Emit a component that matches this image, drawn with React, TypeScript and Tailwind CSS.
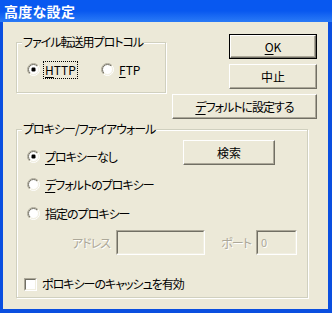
import type { ReactNode } from 'react';

const font = "[font-family:'Noto_Sans_CJK_JP','Liberation_Sans',sans-serif] [font-feature-settings:'palt']";

function Mn({ children }: { children: ReactNode }) {
  return <span className="underline underline-offset-2">{children}</span>;
}

function RadioDot({ checked }: { checked?: boolean }) {
  return (
    <svg width="13" height="13" viewBox="0 0 13 13" className="shrink-0">
      <defs>
        <linearGradient id="rOuter" x1="0" y1="0" x2="1" y2="1">
          <stop offset="50%" stopColor="#ACA899" />
          <stop offset="50%" stopColor="#FFFFFF" />
        </linearGradient>
        <linearGradient id="rInner" x1="0" y1="0" x2="1" y2="1">
          <stop offset="50%" stopColor="#716F64" />
          <stop offset="50%" stopColor="#F1EFE2" />
        </linearGradient>
      </defs>
      <circle cx="6.5" cy="6.5" r="6" fill="none" stroke="url(#rOuter)" strokeWidth="1" />
      <circle cx="6.5" cy="6.5" r="5" fill="#FFFFFF" stroke="url(#rInner)" strokeWidth="1" />
      {checked && <rect x="4.5" y="4.5" width="4" height="4" rx="1.2" fill="#000000" />}
    </svg>
  );
}

function Radio({ checked, focus, children }: { checked?: boolean; focus?: boolean; children: ReactNode }) {
  return (
    <div className="flex items-center h-[13px]">
      <RadioDot checked={checked} />
      <span
        className={`ml-[4px] leading-[16px] px-[1px] ${focus ? 'outline outline-1 outline-dotted outline-black' : ''}`}
      >
        {children}
      </span>
    </div>
  );
}

function Button({ w, def, children }: { w: string; def?: boolean; children: ReactNode }) {
  const face = (
    <div className="flex-1 flex items-center justify-center border border-t-white border-l-white border-r-[#716F64] border-b-[#716F64] shadow-[inset_-1px_-1px_0_#ACA899] bg-[#ECE9D8]">
      {children}
    </div>
  );
  return (
    <div className={`${w} h-[25px] flex ${def ? 'border border-black' : ''}`}>{face}</div>
  );
}

function Group({ label, className, children }: { label: string; className: string; children: ReactNode }) {
  return (
    <div
      className={`relative border border-[#D0D0BF] shadow-[inset_1px_1px_0_#FFFFFF,1px_1px_0_#FFFFFF] ${className}`}
    >
      <span className="absolute -top-[9px] left-[5px] px-[1px] bg-[#ECE9D8] leading-[16px]">{label}</span>
      {children}
    </div>
  );
}

function TextBox({ w, value }: { w: string; value?: string }) {
  return (
    <div className={`${w} h-[25px] flex border border-t-[#ACA899] border-l-[#ACA899] border-r-white border-b-white`}>
      <div className="flex-1 border border-t-[#716F64] border-l-[#716F64] border-r-[#F1EFE2] border-b-[#F1EFE2] bg-[#ECE9D8] text-[#ACA899] text-[11px] pl-[3px] leading-[20px]">
        {value}
      </div>
    </div>
  );
}

export default function App() {
  return (
    <div className={`w-[332px] h-[313px] flex flex-col bg-[#0A4FE0] overflow-hidden text-[12px] tracking-[-1px] text-black ${font}`}>
      <div className="h-[22px] shrink-0 flex items-center pl-[4px] bg-gradient-to-b from-[#0858F0] via-[#0858F0] to-[#2A7AF6]">
        <span className="text-white font-bold text-[14px] leading-none tracking-[0.3px]">高度な設定</span>
      </div>
      <div className="flex-1 ml-[3px] mr-[4px] mb-[4px] bg-[#ECE9D8] pl-[13px] pt-[12px] flex flex-col">
        <div className="flex">
          <Group label="ファイル転送用プロトコル" className="w-[150px] h-[51px] mt-[8px] pl-[10px] pt-[20px]">
            <div className="flex">
              <div className="w-[74px]">
                <Radio checked focus>
                  <span className="tracking-[0px]">
                    <Mn>H</Mn>TTP
                  </span>
                </Radio>
              </div>
              <Radio>
                <span className="tracking-[0px]">
                  <Mn>F</Mn>TP
                </span>
              </Radio>
            </div>
          </Group>
          <div className="ml-[6px] w-[145px] flex flex-col items-end gap-[5px]">
            <Button w="w-[88px]" def>
              <span className="tracking-[0px]">
                <Mn>O</Mn>K
              </span>
            </Button>
            <Button w="w-[88px]">
              <span className="tracking-[0px]">中止</span>
            </Button>
            <Button w="w-[145px]">
              <span>
                <Mn>デ</Mn>フォルトに設定する
              </span>
            </Button>
          </div>
        </div>
        <Group label="プロキシー/ファイアウォール" className="w-[292px] h-[169px] mt-[10px] pl-[10px] pt-[10px] flex flex-col">
          <div className="flex items-start">
            <div className="w-[156px] pt-[10px]">
              <Radio checked>
                <Mn>プ</Mn>ロキシーなし
              </Radio>
            </div>
            <Button w="w-[92px]">
              <span className="tracking-[0px]">検索</span>
            </Button>
          </div>
          <div className="mt-[13px]">
            <Radio>
              <Mn>デ</Mn>フォルトのプロキシー
            </Radio>
          </div>
          <div className="mt-[16px]">
            <Radio>指定のプロキシー</Radio>
          </div>
          <div className="mt-[10px] flex items-center text-[#ACA899] [text-shadow:1px_1px_0_#FFFFFF]">
            <div className="w-[89px] text-right pr-[6px]">アドレス</div>
            <TextBox w="w-[89px]" />
            <div className="w-[51px] text-right pr-[5px]">ポート</div>
            <TextBox w="w-[41px]" value="0" />
          </div>
          <div className="mt-[20px] -ml-[3px] flex items-center">
            <div className="w-[13px] h-[13px] flex border border-t-[#ACA899] border-l-[#ACA899] border-r-white border-b-white">
              <div className="flex-1 border border-t-[#716F64] border-l-[#716F64] border-r-[#F1EFE2] border-b-[#F1EFE2] bg-white" />
            </div>
            <span className="ml-[5px]">ポロキシーのキャッシュを有効</span>
          </div>
        </Group>
      </div>
    </div>
  );
}
